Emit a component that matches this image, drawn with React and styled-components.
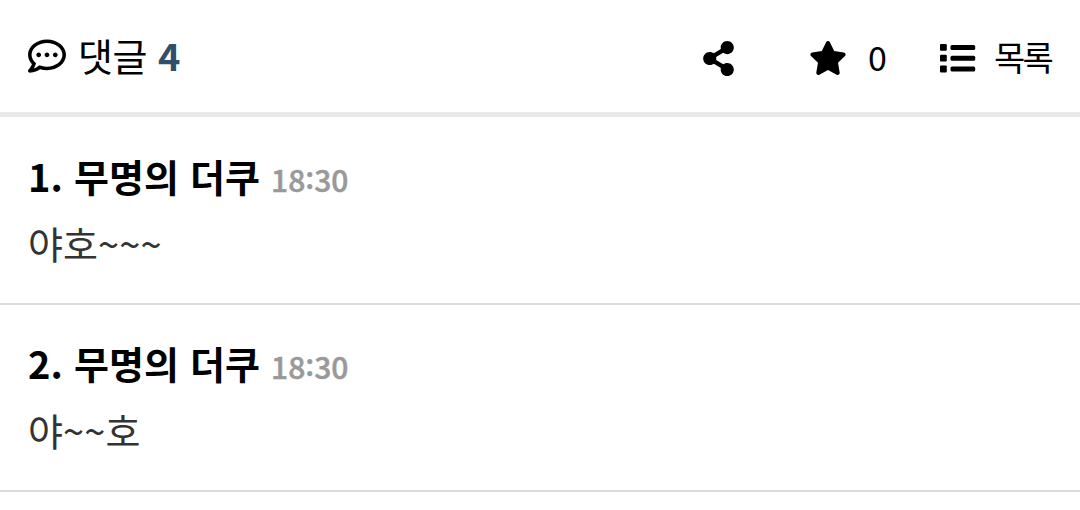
import React from 'react';
import styled, { createGlobalStyle } from 'styled-components';
import { FaRegCommentDots, FaShareAlt, FaStar } from 'react-icons/fa';

const GlobalStyle = createGlobalStyle`
  * {
    box-sizing: border-box;
  }

  body {
    margin: 0;
    background: #fff;
    color: #000;
    font-family: "Noto Sans CJK KR", sans-serif;
    overflow: hidden;
  }
`;

const Toolbar = styled.header`
  display: flex;
  align-items: center;
  justify-content: space-between;
  height: 117px;
  padding: 0 29px 0 28px;
  border-bottom: 5px solid #e9e9e9;
`;

const CommentCount = styled.div`
  display: flex;
  align-items: center;
  font-size: 38px;
  line-height: 56px;
  letter-spacing: -0.5px;

  svg {
    width: 38px;
    height: 38px;
    margin-right: 12px;
  }

  strong {
    margin-left: 11px;
    color: #2f4f6b;
    font-weight: 700;
  }
`;

const Label = styled.span`
  padding-bottom: 3px;
`;

const Actions = styled.div`
  display: flex;
  align-items: center;
`;

const Action = styled.button`
  display: flex;
  align-items: center;
  gap: ${props => props.$gap || 0}px;
  margin-left: ${props => props.$offset || 0}px;
  padding: 0;
  border: 0;
  background: none;
  color: inherit;
  font: inherit;
  font-size: 34px;
  line-height: 52px;
  letter-spacing: -2.8px;

  svg {
    width: ${props => props.$icon}px;
    height: ${props => props.$icon}px;
    margin-top: 4px;
  }

  span {
    padding-top: 2px;
  }
`;

const CommentList = styled.ul`
  margin: 0;
  padding: 1px 0 0;
  list-style: none;
`;

const Comment = styled.li`
  height: 187px;
  padding: 30px 28px 0;
  border-bottom: 2px solid #dcdcdc;
`;

const Meta = styled.div`
  display: flex;
  align-items: baseline;
  gap: 11px;
  height: 56px;
  line-height: 56px;
`;

const Author = styled.span`
  font-size: 38px;
  font-weight: 700;
  word-spacing: 2.6px;
`;

const Time = styled.time`
  color: #999;
  font-size: 30px;
  font-weight: 500;
  -webkit-text-stroke: 0.5px #999;
`;

const Colon = styled.span`
  position: relative;
  top: -3px;
`;

const Body = styled.p`
  margin: 11px 0 0;
  color: #333;
  font-size: 38px;
  line-height: 56px;
  letter-spacing: 0.1px;
`;

const comments = [
  { id: 1, author: '무명의 더쿠', time: '18:30', text: '야호~~~' },
  { id: 2, author: '무명의 더쿠', time: '18:30', text: '야~~호' },
];

const ListIcon = () => (
  <svg viewBox="0 0 36 36" fill="currentColor">
    {[4, 14.8, 25.6].map(y => (
      <g key={y}>
        <rect x="0" y={y} width="6.8" height="6.8" rx="1" />
        <rect x="10.5" y={y + 0.9} width="24.7" height="5" rx="1.5" />
      </g>
    ))}
  </svg>
);

const App = () => {
  return (
    <>
      <GlobalStyle />
      <Toolbar>
        <CommentCount>
          <FaRegCommentDots />
          <Label>댓글</Label>
          <Label as="strong">4</Label>
        </CommentCount>
        <Actions>
          <Action $icon={35} aria-label="공유">
            <FaShareAlt />
          </Action>
          <Action $icon={38} $gap={21} $offset={73}>
            <FaStar />
            <span>0</span>
          </Action>
          <Action $icon={36} $gap={18} $offset={56}>
            <ListIcon />
            <span>목록</span>
          </Action>
        </Actions>
      </Toolbar>
      <CommentList>
        {comments.map(comment => {
          const [hour, minute] = comment.time.split(':');

          return (
            <Comment key={comment.id}>
              <Meta>
                <Author>{comment.id}. {comment.author}</Author>
                <Time>{hour}<Colon>:</Colon>{minute}</Time>
              </Meta>
              <Body>{comment.text}</Body>
            </Comment>
          );
        })}
      </CommentList>
    </>
  );
};

export default App;
